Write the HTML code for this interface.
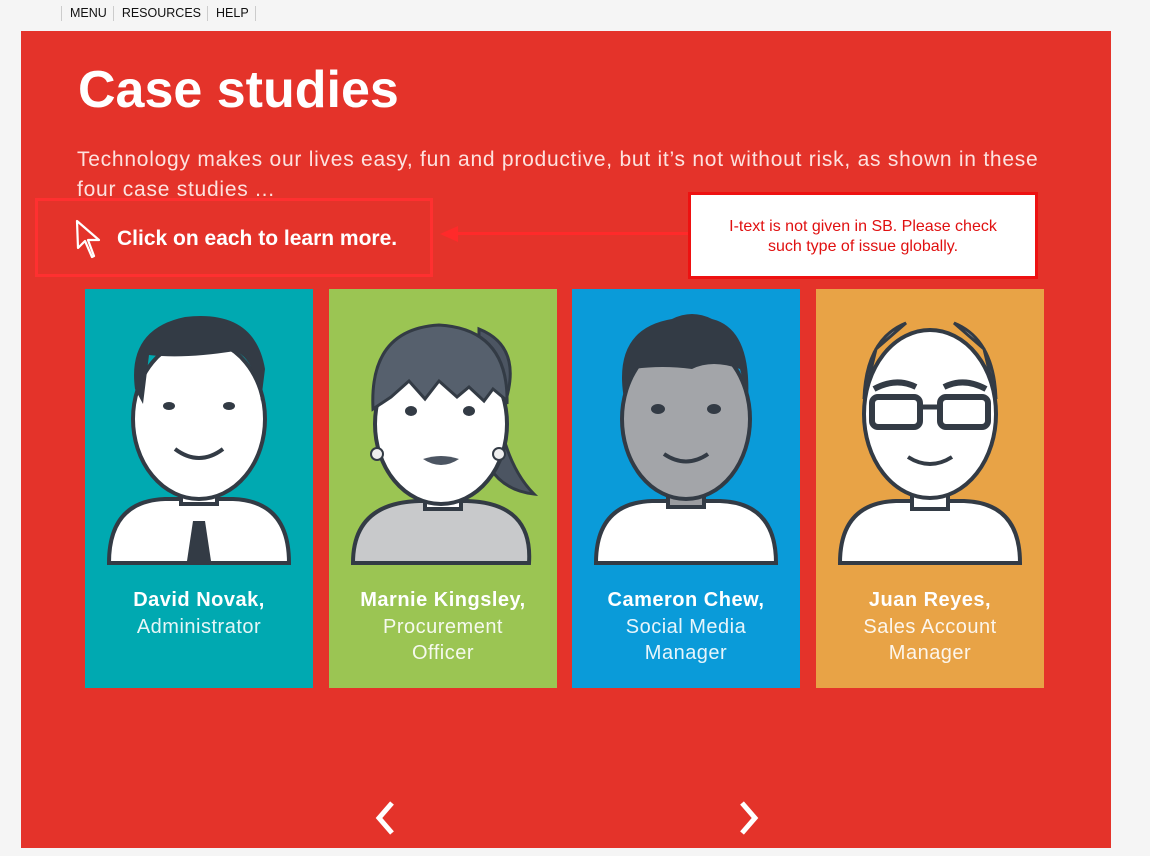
<!DOCTYPE html>
<html><head><meta charset="utf-8"><style>
*{margin:0;padding:0;box-sizing:border-box}
body{width:1150px;height:856px;background:#f5f5f5;font-family:"Liberation Sans",sans-serif;position:relative;overflow:hidden}
.nav{position:absolute;top:6px;left:61px;font-size:12.5px;color:#111;display:flex}
.nav span{border-left:1px solid #ccc;padding:0 6px 0 8px;line-height:15px}
.nav span:last-child{border-right:1px solid #ccc}
.panel{position:absolute;left:21px;top:31px;width:1090px;height:817px;background:#e4332a}
h1{position:absolute;left:78px;top:60px;font-size:52px;color:#fff;font-weight:bold;letter-spacing:0}
.intro{position:absolute;left:77px;top:145px;width:1000px;font-size:21px;line-height:30px;color:#fde2df;letter-spacing:0.75px}
.clickbox{position:absolute;left:35px;top:198px;width:398px;height:79px;border:3px solid #ff3030}
.click{position:absolute;left:117px;top:227px;font-size:21px;font-weight:bold;color:#fff}
.note{position:absolute;left:688px;top:192px;width:350px;height:87px;background:#fff;border:3px solid #ee1111;color:#e01010;font-size:16px;text-align:center;padding-top:22px;line-height:20px}
.arrowline{position:absolute;left:452px;top:232px;width:236px;height:3px;background:#ff2a2a}
.card{position:absolute;top:289px;width:228px;height:399px;text-align:center;color:#fff}
.card svg{position:absolute;left:0;top:0}
.card .t{position:absolute;top:298px;left:0;width:100%;font-size:20px;line-height:26.5px;letter-spacing:0.5px}
.card b{display:block}
.card span{opacity:.9}
</style></head><body>
<div class="nav"><span>MENU</span><span>RESOURCES</span><span>HELP</span></div>
<div class="panel"></div>
<h1>Case studies</h1>
<div class="intro">Technology makes our lives easy, fun and productive, but it’s not without risk, as shown in these<br>four case studies ...</div>
<div class="clickbox"></div>
<svg style="position:absolute;left:74px;top:218px" width="30" height="42" viewBox="0 0 30 42"><path d="M3 3 L4 30 L11 23 L18 39 L20 38 L14 22 L25 22 Z" fill="none" stroke="#fff" stroke-width="2.2" stroke-linejoin="round"/></svg>
<div class="click">Click on each to learn more.</div>
<div class="arrowline"></div>
<svg style="position:absolute;left:438px;top:224px" width="20" height="20"><path d="M2 10 L20 2 L20 18 Z" fill="#ff2a2a"/></svg>
<div class="note">I-text is not given in SB. Please check<br>such type of issue globally.</div>

<div class="card" style="left:85px;background:#00a9b1">
<svg width="228" height="280" viewBox="0 0 228 280">
<path d="M24 274 Q24 212 80 210 L148 210 Q204 212 204 274 Z" fill="#fff" stroke="#333b45" stroke-width="4"/>
<path d="M100 212 L114 228 L128 212 L124 272 L104 272 Z" fill="#fff"/><path d="M108 232 L120 232 L126 272 L102 272 Z" fill="#333b45"/>
<rect x="96" y="175" width="36" height="40" fill="#fff" stroke="#333b45" stroke-width="4"/>
<ellipse cx="114" cy="130" rx="66" ry="80" fill="#fff" stroke="#333b45" stroke-width="4"/>
<path d="M50 100 Q42 40 100 28 Q170 20 180 80 L176 112 Q170 70 150 62 Q100 70 64 66 L58 115 Z" fill="#333b45"/>
<ellipse cx="84" cy="117" rx="6" ry="4" fill="#333b45"/><ellipse cx="144" cy="117" rx="6" ry="4" fill="#333b45"/>
<path d="M90 160 Q114 178 138 160" fill="none" stroke="#333b45" stroke-width="4"/>
</svg>
<div class="t"><b>David Novak,</b><span>Administrator</span></div></div>

<div class="card" style="left:329px;background:#9bc553">
<svg width="228" height="280" viewBox="0 0 228 280">
<path d="M24 274 Q24 214 90 212 L138 212 Q204 214 200 274 Z" fill="#c8c9cb" stroke="#333b45" stroke-width="4"/>
<rect x="96" y="180" width="36" height="40" fill="#fff" stroke="#333b45" stroke-width="4"/>
<path d="M150 40 Q200 60 170 130 Q180 180 205 205 Q160 200 150 150 Z" fill="#4c5562" stroke="#333b45" stroke-width="3"/>
<ellipse cx="112" cy="135" rx="66" ry="80" fill="#fff" stroke="#333b45" stroke-width="4"/>
<path d="M44 120 Q40 40 110 36 Q180 40 178 115 L176 110 L164 100 L155 112 L140 98 L128 108 L110 92 L96 110 L80 92 L62 108 Z" fill="#56606d" stroke="#333b45" stroke-width="3"/>
<ellipse cx="82" cy="122" rx="6" ry="5" fill="#333b45"/><ellipse cx="140" cy="122" rx="6" ry="5" fill="#333b45"/>
<path d="M94 170 Q112 164 130 170 Q112 182 94 170 Z" fill="#4c5562"/>
<circle cx="48" cy="165" r="6" fill="#eee" stroke="#333b45" stroke-width="2"/><circle cx="170" cy="165" r="6" fill="#eee" stroke="#333b45" stroke-width="2"/>
</svg>
<div class="t"><b>Marnie Kingsley,</b><span>Procurement<br>Officer</span></div></div>

<div class="card" style="left:572px;background:#0a9bd9">
<svg width="228" height="280" viewBox="0 0 228 280">
<path d="M24 274 Q24 214 80 212 L148 212 Q204 214 204 274 Z" fill="#fff" stroke="#333b45" stroke-width="4"/>
<rect x="96" y="178" width="36" height="40" fill="#9a9ca0" stroke="#333b45" stroke-width="4"/>
<ellipse cx="114" cy="130" rx="64" ry="80" fill="#a3a5a9" stroke="#333b45" stroke-width="4"/>
<path d="M52 110 Q40 40 100 30 Q120 20 140 30 Q180 40 176 112 L168 80 Q140 70 120 80 Q90 76 62 80 Z" fill="#333b45"/>
<ellipse cx="86" cy="120" rx="7" ry="5" fill="#333b45"/><ellipse cx="142" cy="120" rx="7" ry="5" fill="#333b45"/>
<path d="M92 165 Q114 180 136 165" fill="none" stroke="#333b45" stroke-width="4"/>
</svg>
<div class="t"><b>Cameron Chew,</b><span>Social Media<br>Manager</span></div></div>

<div class="card" style="left:816px;background:#e8a346">
<svg width="228" height="280" viewBox="0 0 228 280">
<path d="M24 274 Q24 214 80 212 L148 212 Q204 214 204 274 Z" fill="#fff" stroke="#333b45" stroke-width="4"/>
<rect x="96" y="180" width="36" height="40" fill="#fff" stroke="#333b45" stroke-width="4"/>
<ellipse cx="114" cy="125" rx="66" ry="84" fill="#fff" stroke="#333b45" stroke-width="4"/>
<path d="M48 110 Q50 50 90 34 L60 60 Z M180 110 Q178 50 138 34 L168 60 Z" fill="#c8c9cb" stroke="#333b45" stroke-width="3"/>
<rect x="56" y="108" width="48" height="30" rx="6" fill="none" stroke="#333b45" stroke-width="6"/><rect x="124" y="108" width="48" height="30" rx="6" fill="none" stroke="#333b45" stroke-width="6"/>
<path d="M104 118 L124 118" stroke="#333b45" stroke-width="5"/>
<path d="M58 100 Q80 88 100 98 M128 98 Q148 88 170 100" fill="none" stroke="#333b45" stroke-width="6"/>
<path d="M92 168 Q114 182 136 168" fill="none" stroke="#333b45" stroke-width="4"/>
</svg>
<div class="t"><b>Juan Reyes,</b><span>Sales Account<br>Manager</span></div></div>

<svg style="position:absolute;left:374px;top:800px" width="24" height="36"><path d="M18 3 L5 18 L18 33" fill="none" stroke="#fff" stroke-width="5"/></svg>
<svg style="position:absolute;left:737px;top:800px" width="24" height="36"><path d="M5 3 L18 18 L5 33" fill="none" stroke="#fff" stroke-width="5"/></svg>
</body></html>
